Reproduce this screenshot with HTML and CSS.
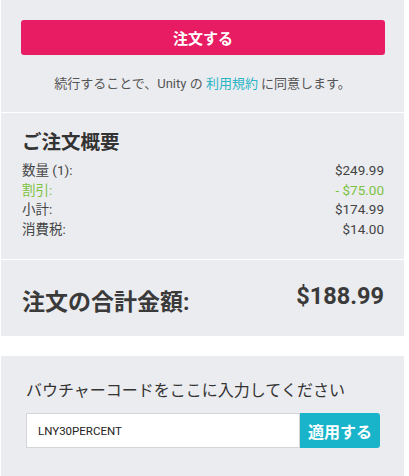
FILE: index.html
```html
<html>
<head>
	<meta charset="utf-8">
	<title>ご注文</title>
	<link rel="stylesheet" href="styles.css">
</head>
<body>
	<div id="checkout">
		<div class="panel placeOrder">
			<button class="orderButton">注文する</button>
			<p class="terms">続行することで、Unity の <a href="#">利用規約</a> に同意します。</p>
		</div>
		<div class="panel summary">
			<h2>ご注文概要</h2>
			<div class="row"><span>数量 (1):</span><span>$249.99</span></div>
			<div class="row discount"><span>割引:</span><span>- $75.00</span></div>
			<div class="row"><span>小計:</span><span>$174.99</span></div>
			<div class="row"><span>消費税:</span><span>$14.00</span></div>
		</div>
		<div class="panel total">
			<span class="totalLabel">注文の合計金額:</span>
			<span class="totalPrice">$188.99</span>
		</div>
	</div>
	<div class="panel voucher">
		<label for="voucherCode">バウチャーコードをここに入力してください</label>
		<div class="voucherForm">
			<input type="text" id="voucherCode" value="LNY30PERCENT">
			<button class="applyButton">適用する</button>
		</div>
	</div>
</body>
</html>
```
FILE: styles.css
```css
body {
	margin: 0;
	background-color: #ffffff;
	color: #333333;
	font-family: 'Roboto', 'Noto Sans CJK JP', sans-serif;
}
.panel {
	background-color: #ebecf0;
	margin: 0 5px 0 1px;
	box-sizing: border-box;
}
#checkout .panel + .panel {
	border-top: 1px solid #ffffff;
}
.placeOrder {
	padding: 20px 20px 0 20px;
	height: 112px;
}
.orderButton {
	display: block;
	width: 364px;
	height: 35px;
	border: none;
	border-radius: 3px;
	background-color: #e81c62;
	color: #ffffff;
	font-family: inherit;
	font-size: 15px;
	font-weight: bold;
	cursor: pointer;
}
.terms {
	margin: 20px 0 0 0;
	font-size: 13px;
	line-height: 18px;
	text-align: center;
	color: #555555;
}
.terms a {
	color: #2bb5c6;
	text-decoration: none;
}
.summary {
	padding: 18px 20px 0 21px;
	height: 147px;
}
.summary h2 {
	margin: 0 0 6px 0;
	font-size: 19.5px;
	line-height: 24px;
	color: #333333;
}
.row {
	display: flex;
	justify-content: space-between;
	font-size: 13.5px;
	line-height: 19.5px;
	color: #444444;
}
.discount {
	color: #7cc242;
}
.total {
	height: 77px;
	padding: 0 20px 0 21px;
	display: flex;
	justify-content: space-between;
	align-items: center;
}
.totalLabel {
	font-size: 23px;
	font-weight: bold;
	color: #3a3a3a;
	margin-top: 4px;
}
.totalPrice {
	font-size: 23.5px;
	font-weight: bold;
	color: #3a3a3a;
	margin-top: -4px;
}
.voucher {
	margin-top: 20px;
	padding: 24px 24px 28px 25px;
}
.voucher label {
	display: block;
	font-size: 16px;
	line-height: 22px;
	color: #333333;
}
.voucherForm {
	display: flex;
	margin-top: 11px;
}
.voucherForm input[type="text"] {
	width: 274px;
	height: 35px;
	box-sizing: border-box;
	border: 1px solid #d4d5d9;
	background-color: #ffffff;
	padding: 0 11px;
	font-family: inherit;
	font-size: 11.5px;
	color: #222222;
	outline: none;
}
.applyButton {
	width: 80px;
	height: 35px;
	border: none;
	border-radius: 0 3px 3px 0;
	background-color: #19b4ca;
	color: #ffffff;
	font-family: inherit;
	font-size: 16px;
	font-weight: bold;
	cursor: pointer;
}
```
